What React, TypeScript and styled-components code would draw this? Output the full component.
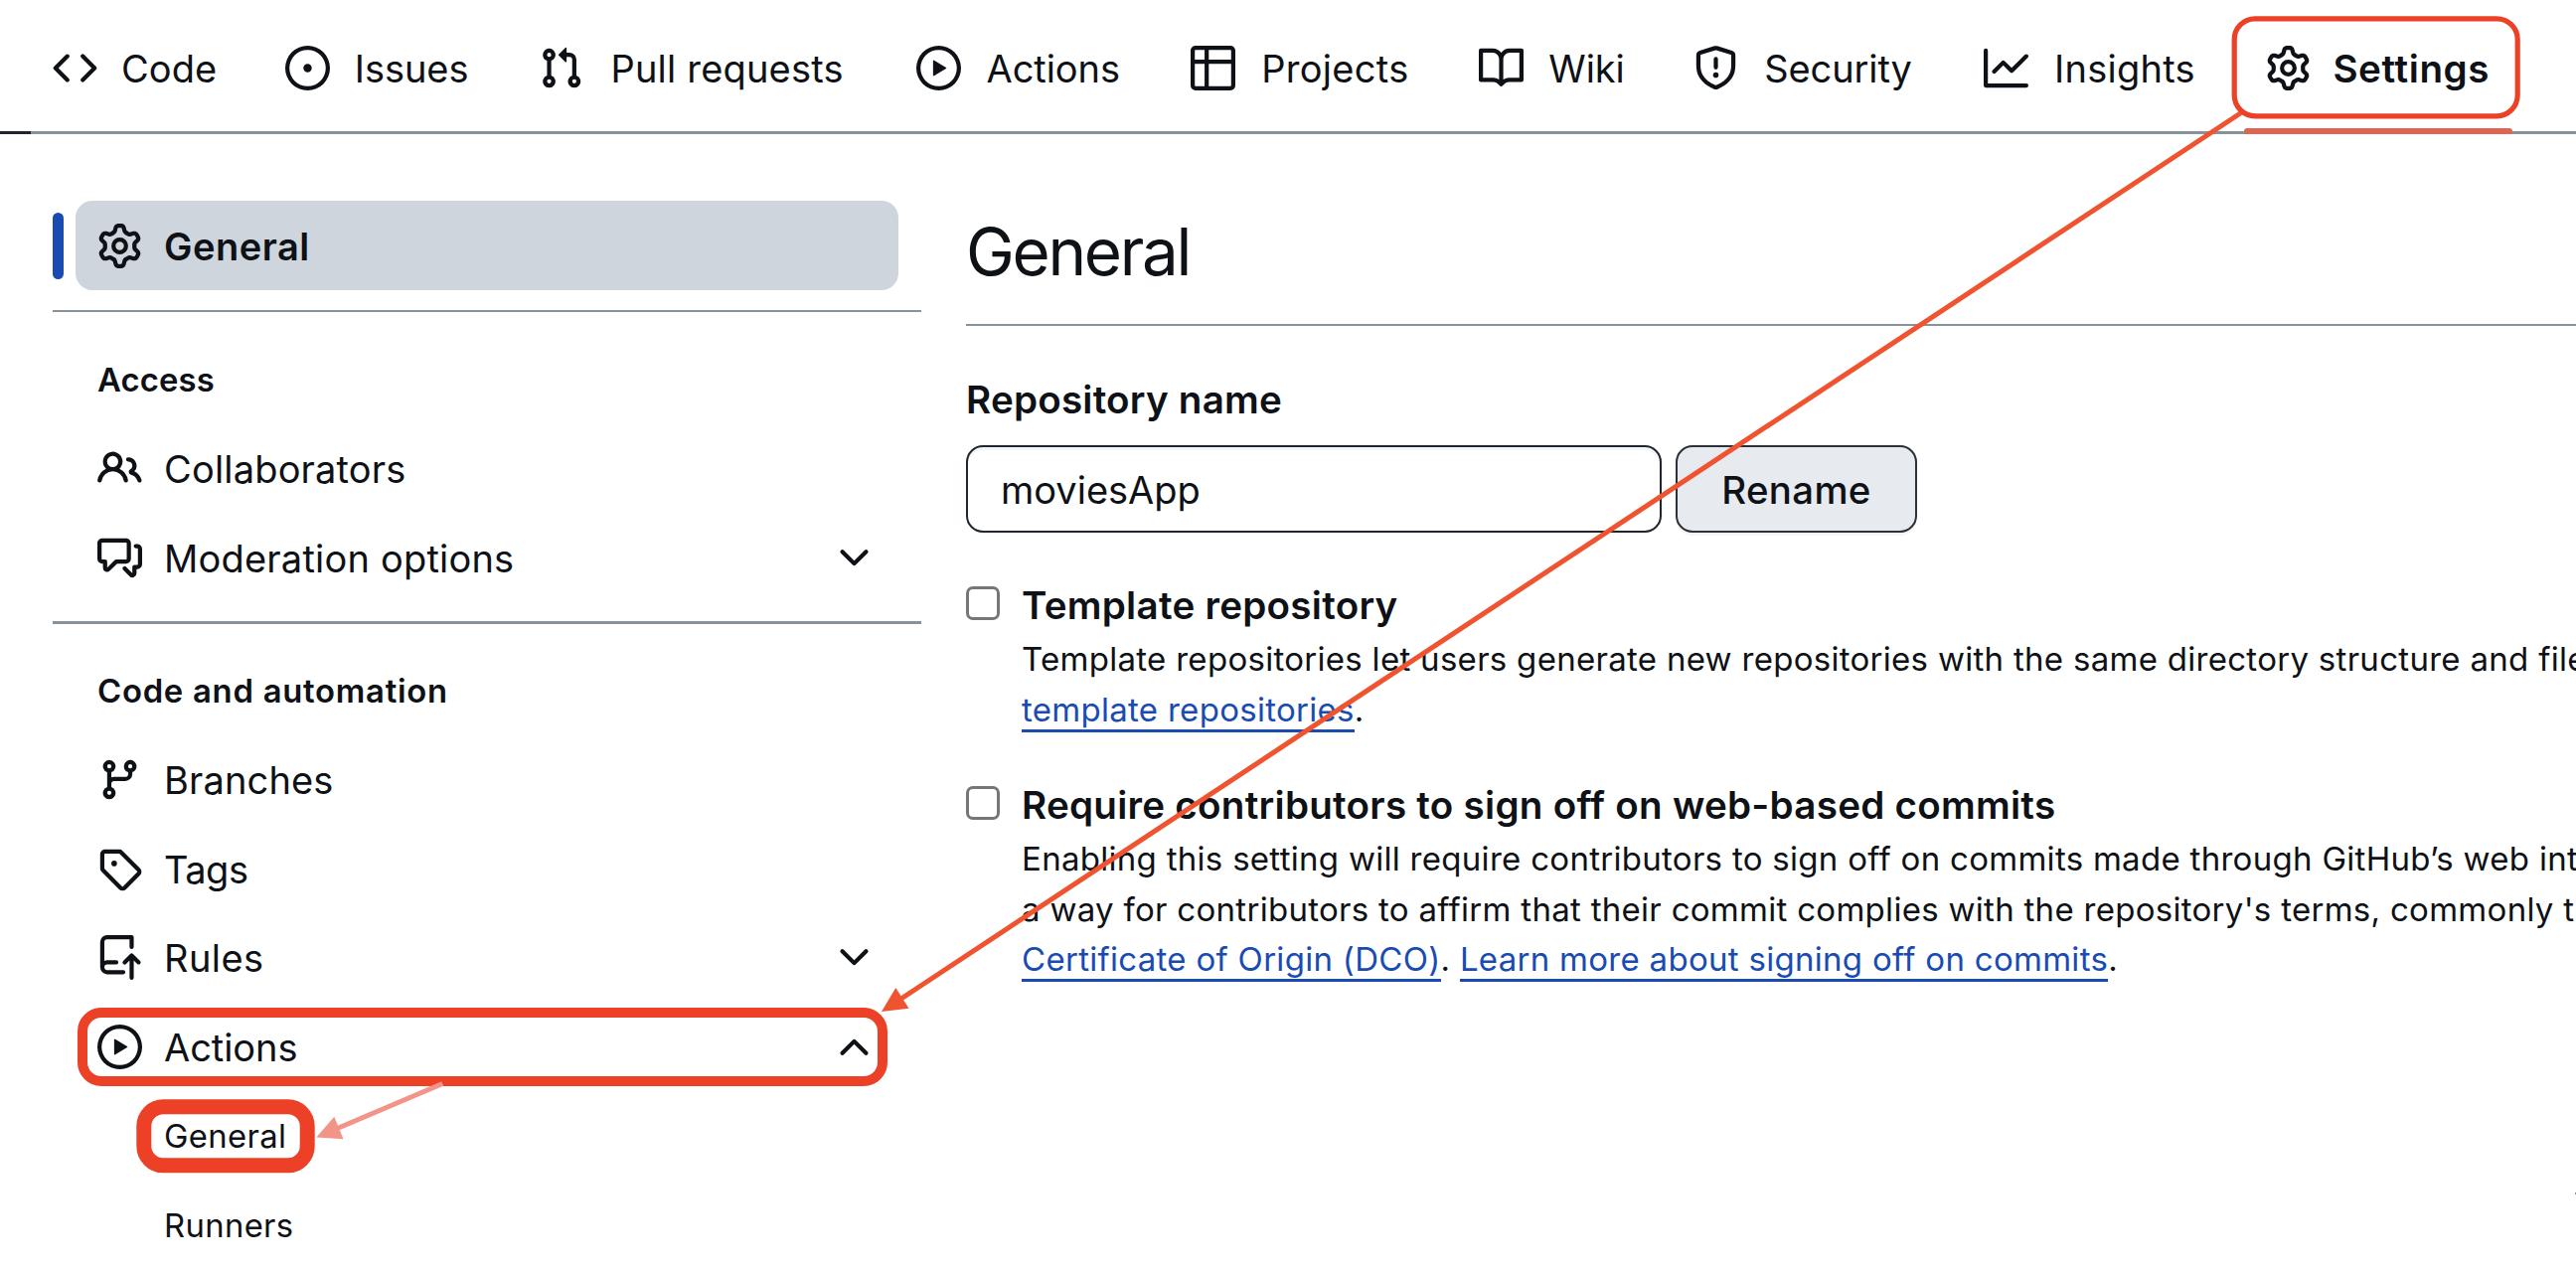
import React from 'react';
import styled, { createGlobalStyle, css } from 'styled-components';

const ink = '#0e1116';
const line = '#88929b';
const link = '#1a4bb3';
const red = '#ec4127';

const GlobalStyle = createGlobalStyle`
  * { box-sizing: border-box; }
  body {
    margin: 0;
    background: #fff;
    color: ${ink};
    font-family: Inter, "Liberation Sans", sans-serif;
  }
`;

/* ---------- icons ---------- */

const paths = {
  code: 'm11.28 3.22 4.25 4.25a.75.75 0 0 1 0 1.06l-4.25 4.25a.749.749 0 0 1-1.275-.326.749.749 0 0 1 .215-.734L13.94 8l-3.72-3.72a.749.749 0 0 1 .326-1.275.749.749 0 0 1 .734.215Zm-6.56 0a.751.751 0 0 1 1.042.018.751.751 0 0 1 .018 1.042L2.06 8l3.72 3.72a.749.749 0 0 1-.326 1.275.749.749 0 0 1-.734-.215L.47 8.53a.75.75 0 0 1 0-1.06Z',
  issue: 'M8 9.5a1.5 1.5 0 1 0 0-3 1.5 1.5 0 0 0 0 3ZM8 0a8 8 0 1 1 0 16A8 8 0 0 1 8 0ZM1.5 8a6.5 6.5 0 1 0 13 0 6.5 6.5 0 0 0-13 0Z',
  pull: 'M1.5 3.25a2.25 2.25 0 1 1 3 2.122v5.256a2.251 2.251 0 1 1-1.5 0V5.372A2.25 2.25 0 0 1 1.5 3.25Zm5.677-.177L9.573.677A.25.25 0 0 1 10 .854V2.5h1A2.5 2.5 0 0 1 13.5 5v5.628a2.251 2.251 0 1 1-1.5 0V5a1 1 0 0 0-1-1h-1v1.646a.25.25 0 0 1-.427.177L7.177 3.427a.25.25 0 0 1 0-.354ZM3.75 2.5a.75.75 0 1 0 0 1.5.75.75 0 0 0 0-1.5Zm0 9.5a.75.75 0 1 0 0 1.5.75.75 0 0 0 0-1.5Zm8.25.75a.75.75 0 1 0 1.5 0 .75.75 0 0 0-1.5 0Z',
  play: 'M8 0a8 8 0 1 1 0 16A8 8 0 0 1 8 0ZM1.5 8a6.5 6.5 0 1 0 13 0 6.5 6.5 0 0 0-13 0Zm4.879-2.773 4.264 2.559a.25.25 0 0 1 0 .428l-4.264 2.559A.25.25 0 0 1 6 10.559V5.442a.25.25 0 0 1 .379-.215Z',
  table: 'M0 1.75C0 .784.784 0 1.75 0h12.5C15.216 0 16 .784 16 1.75v12.5A1.75 1.75 0 0 1 14.25 16H1.75A1.75 1.75 0 0 1 0 14.25ZM6.5 6.5v8h7.75a.25.25 0 0 0 .25-.25V6.5Zm8-1.5V1.75a.25.25 0 0 0-.25-.25H6.5V5Zm-13 1.5v7.75c0 .138.112.25.25.25H5v-8ZM5 5V1.5H1.75a.25.25 0 0 0-.25.25V5Z',
  book: 'M0 1.75A.75.75 0 0 1 .75 1h4.253c1.227 0 2.317.59 3 1.501A3.743 3.743 0 0 1 11.006 1h4.245a.75.75 0 0 1 .75.75v10.5a.75.75 0 0 1-.75.75h-4.507a2.25 2.25 0 0 0-1.591.659l-.622.621a.75.75 0 0 1-1.06 0l-.622-.621A2.25 2.25 0 0 0 5.258 13H.75a.75.75 0 0 1-.75-.75Zm7.251 10.324.004-5.073-.002-2.253A2.25 2.25 0 0 0 5.003 2.5H1.5v9h3.757a3.75 3.75 0 0 1 1.994.574ZM8.755 4.75l-.004 7.322a3.752 3.752 0 0 1 1.992-.572H14.5v-9h-3.495a2.25 2.25 0 0 0-2.25 2.25Z',
  shield: 'M7.467.133a1.748 1.748 0 0 1 1.066 0l5.25 1.68A1.75 1.75 0 0 1 15 3.48V7c0 1.566-.32 3.182-1.303 4.682-.983 1.498-2.585 2.813-5.032 3.855a1.697 1.697 0 0 1-1.33 0c-2.447-1.042-4.049-2.357-5.032-3.855C1.32 10.182 1 8.566 1 7V3.48a1.75 1.75 0 0 1 1.217-1.667Zm.61 1.429a.25.25 0 0 0-.153 0l-5.25 1.68a.25.25 0 0 0-.174.238V7c0 1.358.275 2.666 1.057 3.86.784 1.194 2.121 2.34 4.366 3.297a.196.196 0 0 0 .154 0c2.245-.956 3.582-2.104 4.366-3.298C13.225 9.666 13.5 8.36 13.5 7V3.48a.251.251 0 0 0-.174-.237l-5.25-1.68ZM8.75 4.75v3a.75.75 0 0 1-1.5 0v-3a.75.75 0 0 1 1.5 0ZM9 10.5a1 1 0 1 1-2 0 1 1 0 0 1 2 0Z',
  graph: 'M1.5 1.75V13.5h13.75a.75.75 0 0 1 0 1.5H.75a.75.75 0 0 1-.75-.75V1.75a.75.75 0 0 1 1.5 0Zm14.28 2.53-5.25 5.25a.75.75 0 0 1-1.06 0L7 7.06 4.28 9.78a.751.751 0 0 1-1.042-.018.751.751 0 0 1-.018-1.042l3.25-3.25a.75.75 0 0 1 1.06 0L10 7.94l4.72-4.72a.751.751 0 0 1 1.042.018.751.751 0 0 1 .018 1.042Z',
  gear: 'M8 0a8.2 8.2 0 0 1 .701.031C9.444.095 9.99.645 10.16 1.29l.288 1.107c.018.066.079.158.212.224.231.114.454.243.668.386.123.082.233.09.299.071l1.103-.303c.644-.176 1.392.021 1.82.63.27.385.506.792.704 1.218.315.675.111 1.422-.364 1.891l-.814.806c-.049.048-.098.147-.088.294.016.257.016.515 0 .772-.01.147.038.246.088.294l.814.806c.475.469.679 1.216.364 1.891a7.977 7.977 0 0 1-.704 1.217c-.428.61-1.176.807-1.82.63l-1.102-.302c-.067-.019-.177-.011-.3.071a5.909 5.909 0 0 1-.668.386c-.133.066-.194.158-.211.224l-.29 1.106c-.168.646-.715 1.196-1.458 1.26a8.006 8.006 0 0 1-1.402 0c-.743-.064-1.289-.614-1.458-1.26l-.289-1.106c-.018-.066-.079-.158-.212-.224a5.738 5.738 0 0 1-.668-.386c-.123-.082-.233-.09-.299-.071l-1.103.303c-.644.176-1.392-.021-1.82-.63a8.12 8.12 0 0 1-.704-1.218c-.315-.675-.111-1.422.363-1.891l.815-.806c.05-.048.098-.147.088-.294a6.214 6.214 0 0 1 0-.772c.01-.147-.038-.246-.088-.294l-.815-.806C.635 6.045.431 5.298.746 4.623a7.92 7.92 0 0 1 .704-1.217c.428-.61 1.176-.807 1.82-.63l1.102.302c.067.019.177.011.3-.071.214-.143.437-.272.668-.386.133-.066.194-.158.211-.224l.29-1.106C6.009.645 6.556.095 7.299.03 7.53.01 7.764 0 8 0Zm-.571 1.525c-.036.003-.108.036-.137.146l-.289 1.105c-.147.561-.549.967-.998 1.189-.173.086-.34.183-.5.29-.417.278-.97.423-1.529.27l-1.103-.303c-.109-.03-.175.016-.195.045-.22.312-.412.644-.573.99-.014.031-.021.11.059.19l.815.806c.411.406.562.957.53 1.456a4.709 4.709 0 0 0 0 .582c.032.499-.119 1.05-.53 1.456l-.815.806c-.081.08-.073.159-.059.19.162.346.353.677.573.989.02.03.085.076.195.046l1.102-.303c.56-.153 1.113-.008 1.53.27.161.107.328.204.501.29.447.222.85.629.997 1.189l.289 1.105c.029.109.101.143.137.146a6.6 6.6 0 0 0 1.142 0c.036-.003.108-.036.137-.146l.289-1.105c.147-.561.549-.967.998-1.189.173-.086.34-.183.5-.29.417-.278.97-.423 1.529-.27l1.103.303c.109.029.175-.016.195-.045.22-.313.411-.644.573-.99.014-.031.021-.11-.059-.19l-.815-.806c-.411-.406-.562-.957-.53-1.456a4.709 4.709 0 0 0 0-.582c-.032-.499.119-1.05.53-1.456l.815-.806c.081-.08.073-.159.059-.19a6.464 6.464 0 0 0-.573-.989c-.02-.03-.085-.076-.195-.046l-1.102.303c-.56.153-1.113.008-1.53-.27a4.44 4.44 0 0 0-.501-.29c-.447-.222-.85-.629-.997-1.189l-.289-1.105c-.029-.11-.101-.143-.137-.146a6.6 6.6 0 0 0-1.142 0ZM11 8a3 3 0 1 1-6 0 3 3 0 0 1 6 0ZM9.5 8a1.5 1.5 0 1 0-3.001.001A1.5 1.5 0 0 0 9.5 8Z',
  people: 'M2 5.5a3.5 3.5 0 1 1 5.898 2.549 5.508 5.508 0 0 1 3.034 4.084.75.75 0 1 1-1.482.235 4 4 0 0 0-7.9 0 .75.75 0 0 1-1.482-.236A5.507 5.507 0 0 1 3.102 8.05 3.493 3.493 0 0 1 2 5.5ZM11 4a3.001 3.001 0 0 1 2.22 5.018 5.01 5.01 0 0 1 2.56 3.012.749.749 0 0 1-.885.954.752.752 0 0 1-.549-.514 3.507 3.507 0 0 0-2.522-2.372.75.75 0 0 1-.574-.73v-.352a.75.75 0 0 1 .416-.672A1.5 1.5 0 0 0 11 5.5.75.75 0 0 1 11 4Zm-5.5-.5a2 2 0 1 0-.001 3.999A2 2 0 0 0 5.5 3.5Z',
  discussion: 'M1.75 1h8.5c.966 0 1.75.784 1.75 1.75v5.5A1.75 1.75 0 0 1 10.25 10H7.061l-2.574 2.573A1.458 1.458 0 0 1 2 11.543V10h-.25A1.75 1.75 0 0 1 0 8.25v-5.5C0 1.784.784 1 1.75 1ZM1.5 2.75v5.5c0 .138.112.25.25.25h1a.75.75 0 0 1 .75.75v2.19l2.72-2.72a.749.749 0 0 1 .53-.22h3.5a.25.25 0 0 0 .25-.25v-5.5a.25.25 0 0 0-.25-.25h-8.5a.25.25 0 0 0-.25.25Zm13 2a.25.25 0 0 0-.25-.25h-.5a.75.75 0 0 1 0-1.5h.5c.966 0 1.75.784 1.75 1.75v5.5A1.75 1.75 0 0 1 14.25 12H14v1.543a1.458 1.458 0 0 1-2.487 1.03L9.22 12.28a.749.749 0 0 1 .326-1.275.749.749 0 0 1 .734.215l2.22 2.22v-2.19a.75.75 0 0 1 .75-.75h1a.25.25 0 0 0 .25-.25Z',
  branch: 'M9.5 3.25a2.25 2.25 0 1 1 3 2.122V6A2.5 2.5 0 0 1 10 8.5H6a1 1 0 0 0-1 1v1.128a2.251 2.251 0 1 1-1.5 0V5.372a2.25 2.25 0 1 1 1.5 0v1.836A2.493 2.493 0 0 1 6 7h4a1 1 0 0 0 1-1v-.628A2.25 2.25 0 0 1 9.5 3.25Zm-6 0a.75.75 0 1 0 1.5 0 .75.75 0 0 0-1.5 0Zm8.25-.75a.75.75 0 1 0 0 1.5.75.75 0 0 0 0-1.5ZM4.25 12a.75.75 0 1 0 0 1.5.75.75 0 0 0 0-1.5Z',
  tag: 'M1 7.775V2.75C1 1.784 1.784 1 2.75 1h5.025c.464 0 .91.184 1.238.513l6.25 6.25a1.75 1.75 0 0 1 0 2.474l-5.026 5.026a1.75 1.75 0 0 1-2.474 0l-6.25-6.25A1.752 1.752 0 0 1 1 7.775Zm1.5 0c0 .066.026.13.073.177l6.25 6.25a.25.25 0 0 0 .354 0l5.025-5.025a.25.25 0 0 0 0-.354l-6.25-6.25a.25.25 0 0 0-.177-.073H2.75a.25.25 0 0 0-.25.25ZM6 5a1 1 0 1 1 0 2 1 1 0 0 1 0-2Z',
  push: 'M1 2.5A2.5 2.5 0 0 1 3.5 0h8.75a.75.75 0 0 1 .75.75v3.5a.75.75 0 0 1-1.5 0V1.5h-8a1 1 0 0 0-1 1v6.708A2.493 2.493 0 0 1 3.5 9h3.25a.75.75 0 0 1 0 1.5H3.5a1 1 0 0 0 0 2h5.75a.75.75 0 0 1 0 1.5H3.5A2.5 2.5 0 0 1 1 11.5Zm13.23 7.79h-.001l-1.224-1.224v6.184a.75.75 0 0 1-1.5 0V9.066L10.28 10.29a.75.75 0 0 1-1.06-1.061l2.505-2.504a.75.75 0 0 1 1.06 0L15.29 9.23a.751.751 0 0 1-.018 1.042.751.751 0 0 1-1.042.018Z',
  down: 'M12.78 5.22a.749.749 0 0 1 0 1.06l-4.25 4.25a.749.749 0 0 1-1.06 0L3.22 6.28a.749.749 0 1 1 1.06-1.06L8 8.939l3.72-3.719a.749.749 0 0 1 1.06 0Z',
  up: 'M3.22 10.78a.749.749 0 0 1 0-1.06l4.25-4.25a.749.749 0 0 1 1.06 0l4.25 4.25a.749.749 0 1 1-1.06 1.06L8 7.061 4.28 10.78a.749.749 0 0 1-1.06 0Z',
};
type IconName = keyof typeof paths;

const Glyph = styled.svg`
  display: block;
  flex: none;
  width: 45px;
  height: 45px;
  fill: currentColor;
`;

const Icon = ({ name }: { name: IconName }) => (
  <Glyph viewBox="0 0 16 16" aria-hidden="true">
    <path d={paths[name]} />
  </Glyph>
);

/* ---------- page frame ---------- */

const Page = styled.div`
  position: relative;
  width: 2592px;
  height: 1278px;
  overflow: hidden;
  background: #fff;
`;

const Columns = styled.div`
  display: grid;
  grid-template-columns: 874px 1fr;
  column-gap: 45px;
  padding-left: 53px;
`;

/* ---------- tab bar ---------- */

const TabBar = styled.nav`
  display: flex;
  height: 132px;
  padding: 5px 0 0 53px;
`;

const TabRule = styled.div`
  height: 3px;
  background: linear-gradient(to right, #20262d 31px, ${line} 31px);
`;

const Tab = styled.a<{ $width: number; $gap: number; $current?: boolean }>`
  position: relative;
  display: flex;
  flex: none;
  align-items: center;
  width: ${(p) => p.$width}px;
  gap: ${(p) => p.$gap}px;
  font-size: ${(p) => (p.$current ? 38.6 : 38)}px;
  font-weight: ${(p) => (p.$current ? 600 : 400)};
  white-space: nowrap;

  ${(p) =>
    p.$current &&
    css`
      &::after {
        content: '';
        position: absolute;
        left: -22px;
        bottom: -3px;
        width: 270px;
        height: 6px;
        border-radius: 3px;
        background: #df6552;
      }
    `}
`;

const Text = styled.span<{ $track?: number }>`
  padding-top: 1px;
  letter-spacing: ${(p) => p.$track ?? 0}px;
`;

const tabs: { icon: IconName; label: string; width: number; gap: number; track: number }[] = [
  { icon: 'code', label: 'Code', width: 234, gap: 24, track: 0.1 },
  { icon: 'issue', label: 'Issues', width: 255, gap: 24.8, track: -0.07 },
  { icon: 'pull', label: 'Pull requests', width: 380, gap: 27.5, track: 0.19 },
  { icon: 'play', label: 'Actions', width: 276, gap: 25.5, track: -0.07 },
  { icon: 'table', label: 'Projects', width: 290, gap: 26.2, track: 0.3 },
  { icon: 'book', label: 'Wiki', width: 216, gap: 25.3, track: -0.1 },
  { icon: 'shield', label: 'Security', width: 292, gap: 26.2, track: -0.1 },
  { icon: 'graph', label: 'Insights', width: 284, gap: 26, track: 0.25 },
  { icon: 'gear', label: 'Settings', width: 270, gap: 22.4, track: 0.6 },
];

/* ---------- sidebar ---------- */

const Sidebar = styled.aside`
  padding-top: 67px;
`;

const Divider = styled.hr<{ $weight: number; $top: number }>`
  height: ${(p) => p.$weight}px;
  margin: ${(p) => p.$top}px 0 0;
  border: 0;
  background: ${line};
`;

const GroupTitle = styled.h3<{ $track: number; $height: number }>`
  margin: 22px 0 0 45px;
  height: ${(p) => p.$height}px;
  font-size: 32.8px;
  font-weight: 600;
  line-height: ${(p) => p.$height + 1}px;
  letter-spacing: ${(p) => p.$track}px;
`;

const Row = styled.a<{ $current?: boolean }>`
  position: relative;
  display: flex;
  align-items: center;
  width: 828px;
  height: 89.5px;
  margin-left: 23px;
  padding: 0 22px;
  gap: 22px;
  border-radius: 17px;
  font-size: 38px;

  ${(p) =>
    p.$current &&
    css`
      height: 90px;
      background: #ced5dd;
      font-weight: 600;

      &::before {
        content: '';
        position: absolute;
        left: -23px;
        top: 12px;
        width: 11px;
        height: 67px;
        border-radius: 6px;
        background: #1b4bb0;
      }
    `}
`;

const SubRow = styled(Row)`
  padding-left: 89px;
  font-size: 32.8px;
`;

const Toggle = styled.span`
  margin-left: auto;
`;

interface RowData {
  icon: IconName;
  label: string;
  track: number;
  toggle?: 'up' | 'down';
}

interface Group {
  title: string;
  track: number;
  height: number;
  rule: number;
  above: number;
  rows: RowData[];
}

const groups: Group[] = [
  {
    title: 'Access',
    track: 0.15,
    height: 91,
    rule: 2,
    above: 20,
    rows: [
      { icon: 'people', label: 'Collaborators', track: 0.18 },
      { icon: 'discussion', label: 'Moderation options', track: 0.2, toggle: 'down' },
    ],
  },
  {
    title: 'Code and automation',
    track: 0.75,
    height: 90,
    rule: 3,
    above: 19,
    rows: [
      { icon: 'branch', label: 'Branches', track: 0.15 },
      { icon: 'tag', label: 'Tags', track: -0.5 },
      { icon: 'push', label: 'Rules', track: 0.45, toggle: 'down' },
      { icon: 'play', label: 'Actions', track: -0.05, toggle: 'up' },
    ],
  },
];

/* ---------- main form ---------- */

const Main = styled.main`
  overflow: hidden;
  padding-top: 70px;
  white-space: nowrap;
`;

const Heading = styled.h1`
  margin: 0;
  padding-bottom: 23px;
  border-bottom: 2px solid ${line};
  font-size: 65.5px;
  font-weight: 400;
  line-height: 98px;
  letter-spacing: -2.3px;
`;

const FieldLabel = styled.label`
  display: block;
  margin: 46px 0 18px;
  font-size: 38.6px;
  font-weight: 600;
  line-height: 56px;
  letter-spacing: 0.22px;
`;

const FieldRow = styled.div`
  display: flex;
  gap: 14px;
`;

const TextField = styled.div`
  display: flex;
  align-items: center;
  width: 700px;
  height: 88px;
  padding: 2px 0 0 33px;
  border: 2px solid #20262d;
  border-radius: 17px;
  box-shadow: inset 0 3px 0 rgba(208, 215, 222, 0.25);
  font-size: 38px;
`;

const Button = styled.button`
  width: 243px;
  height: 88px;
  padding: 2px 0 0;
  border: 2px solid #2b3138;
  border-radius: 17px;
  background: #e7eaef;
  box-shadow: 0 3px 0 rgba(31, 35, 40, 0.04);
  color: ${ink};
  font: 500 38.4px Inter, sans-serif;
  letter-spacing: 0.35px;
`;

const Option = styled.div`
  display: flex;
  align-items: flex-start;
  gap: 22px;
  margin-top: 45.3px;
`;

const Options = styled.div`
  padding-top: 2.5px;
`;

const Checkbox = styled.span`
  flex: none;
  width: 34px;
  height: 34px;
  margin-top: 6px;
  border: 3px solid #767676;
  border-radius: 7px;
`;

const OptionTitle = styled.div`
  margin-bottom: 4.5px;
  font-size: 38.6px;
  font-weight: 600;
  line-height: 50px;
  letter-spacing: 0.26px;
`;

const OptionNote = styled.div`
  font-size: 33px;
  line-height: 50.6px;
  letter-spacing: 0.29px;
`;

const Link = styled.a`
  border-bottom: 3px solid ${link};
  color: ${link};
`;

/* ---------- markup drawn over the page ---------- */

const Markup = styled.svg`
  position: absolute;
  inset: 0;
  width: 2592px;
  height: 1278px;
  fill: none;
  pointer-events: none;
`;

export default function App() {
  return (
    <Page>
      <GlobalStyle />
      <TabBar>
        {tabs.map((t) => (
          <Tab key={t.label} $width={t.width} $gap={t.gap} $current={t.label === 'Settings'}>
            <Icon name={t.icon} />
            <Text $track={t.track}>{t.label}</Text>
          </Tab>
        ))}
      </TabBar>
      <TabRule />

      <Columns>
        <Sidebar>
          <Row $current>
            <Icon name="gear" />
            <Text $track={0.52}>General</Text>
          </Row>
          {groups.map((g) => (
            <React.Fragment key={g.title}>
              <Divider $weight={g.rule} $top={g.above} />
              <GroupTitle $track={g.track} $height={g.height}>
                {g.title}
              </GroupTitle>
              {g.rows.map((r) => (
                <Row key={r.label}>
                  <Icon name={r.icon} />
                  <Text $track={r.track}>{r.label}</Text>
                  {r.toggle && (
                    <Toggle>
                      <Icon name={r.toggle} />
                    </Toggle>
                  )}
                </Row>
              ))}
            </React.Fragment>
          ))}
          <SubRow>
            <Text $track={0.35}>General</Text>
          </SubRow>
          <SubRow>
            <Text $track={0.35}>Runners</Text>
          </SubRow>
        </Sidebar>

        <Main>
          <Heading>General</Heading>
          <FieldLabel>Repository name</FieldLabel>
          <FieldRow>
            <TextField>moviesApp</TextField>
            <Button>Rename</Button>
          </FieldRow>
          <Options>
            <Option>
              <Checkbox />
              <div>
                <OptionTitle>Template repository</OptionTitle>
                <OptionNote>
                  Template repositories let users generate new repositories with the same directory structure and files
                  <br />
                  <Link>template repositories</Link>.
                </OptionNote>
              </div>
            </Option>
            <Option>
              <Checkbox />
              <div>
                <OptionTitle>Require contributors to sign off on web-based commits</OptionTitle>
                <OptionNote>
                  Enabling this setting will require contributors to sign off on commits made through GitHub’s web inte
                  <br />
                  a way for contributors to affirm that their commit complies with the repository's terms, commonly th
                  <br />
                  <Link>Certificate of Origin (DCO)</Link>. <Link>Learn more about signing off on commits</Link>.
                </OptionNote>
              </div>
            </Option>
          </Options>
        </Main>
      </Columns>

      <Markup viewBox="0 0 2592 1278">
        <g stroke="#f0532f" strokeWidth="5">
          <path d="M2255 113.5 906 1005.5" />
          <path d="M887 1018 901.3 994 914.5 1014.7Z" fill="#f0532f" stroke="none" />
        </g>
        <rect x="2248.2" y="18.8" width="285" height="98" rx="21" stroke={red} strokeWidth="5.2" />
        <rect x="83" y="1019" width="805" height="69" rx="19" stroke={red} strokeWidth="10" />
        <rect x="144.8" y="1113.8" width="164.4" height="59" rx="19.5" stroke={red} strokeWidth="15" />
        <g stroke="#f39488" strokeWidth="5">
          <path d="M445.3 1090.5 340 1135.3" />
          <path d="M318.3 1144.5 336.3 1123.8 345.5 1146.3Z" fill="#f39488" stroke="none" />
        </g>
        <path d="M2591 1200h1v2h-1z" fill="#8a8a8a" />
      </Markup>
    </Page>
  );
}
